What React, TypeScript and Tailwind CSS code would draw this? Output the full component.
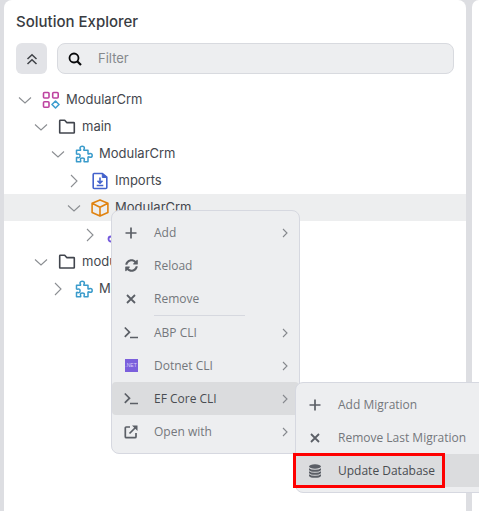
import type { ReactNode } from "react";
import { FaSyncAlt } from "react-icons/fa";

function Chevron({ open }: { open?: boolean }) {
  return (
    <svg viewBox="0 0 14 14" className="size-3.5 shrink-0" fill="none" stroke="#8b8e92" strokeWidth="1.1">
      <path d={open ? "M1 4.500 7 10l6-5.500" : "M4 1 10 7l-6 6"} />
    </svg>
  );
}

function CollapseIcon() {
  return (
    <svg viewBox="0 0 12 12" className="size-3" fill="none" stroke="#3f4247" strokeWidth="1.500">
      <path d="M1.500 6 6 1.700 10.500 6M1.500 11 6 6.700 10.500 11" />
    </svg>
  );
}

function SearchIcon() {
  return (
    <svg viewBox="0 0 14 14" className="size-3.5 shrink-0" fill="none" stroke="#08090b" strokeWidth="1.800">
      <circle cx="6" cy="6" r="4.500" />
      <path d="m9.200 9.200 3.800 3.800" strokeWidth="2.200" />
    </svg>
  );
}

function SolutionIcon() {
  return (
    <svg viewBox="0 0 18 18" className="size-[18px] shrink-0" fill="none" stroke="#bd43a0" strokeWidth="1.600">
      <rect x="1.500" y="1.500" width="5.500" height="5.500" rx="1" />
      <rect x="10.700" y="1.500" width="5.500" height="5.500" rx="1" />
      <rect x="1.500" y="10.700" width="5.500" height="5.500" rx="1" />
      <path d="m13.500 10 3.500 3.500-3.500 3.500-3.500-3.500z" stroke="#3f9fd0" strokeLinejoin="round" />
    </svg>
  );
}

function FolderIcon() {
  return (
    <svg viewBox="0 0 18 18" className="size-[18px] shrink-0" fill="none" stroke="#41454d" strokeWidth="1.600" strokeLinejoin="round">
      <path d="M2.300 2.300h4.400l2 2.300h7q.600 0 .600.600v9.200q0 .600-.600.600H2.300q-.600 0-.600-.600V2.900q0-.600.600-.600z" />
    </svg>
  );
}

function PuzzleIcon() {
  return (
    <svg viewBox="0 0 18 18" className="size-[18px] shrink-0" fill="none" stroke="#3a9bcb" strokeWidth="1.500" strokeLinejoin="round">
      <path d="M1.500 5.300h4C6 4.500 5 4.200 5 3.100 5 2 6 1.200 7.200 1.200s2.200.800 2.200 1.900c0 1.100-1 1.400-.5 2.200H13v3.500c.8.600 1.300-.3 2.300-.3 1.100 0 1.900.8 1.900 1.900s-.8 1.900-1.900 1.900c-1 0-1.500-.9-2.300-.3v4.700H9.200c-.6-.7.200-1.200.2-2.100 0-.9-.9-1.500-2-1.500s-2 .6-2 1.500c0 .9.800 1.400.2 2.100H1.500v-4.200c.7-.6 1.200.2 2 .2 1 0 1.600-.8 1.600-1.700S4.500 8.900 3.500 8.900c-.8 0-1.300.7-2 .1z" />
    </svg>
  );
}

function ImportsIcon() {
  return (
    <svg viewBox="0 0 18 18" className="size-[18px] shrink-0" fill="none" stroke="#4362cc" strokeWidth="1.600" strokeLinejoin="round">
      <path d="M3 1.500h8.500L15.800 5v10.500q0 1-1 1H3.200q-1 0-1-1v-13q0-1 1-1z" />
      <path d="M11.300 1.500V5.500h4.500z" fill="#4362cc" strokeWidth="1" />
      <path d="M9 5.500v5.500M6.500 8.700 9 11.200l2.500-2.500M5.700 13.500h6.600" />
    </svg>
  );
}

function PackageIcon() {
  return (
    <svg viewBox="0 0 18 18" className="size-[18px] shrink-0" fill="none" stroke="#e0820f" strokeWidth="1.600" strokeLinejoin="round">
      <path d="m9 .900 7.900 3.400v9.300L9 17.100l-7.900-3.500V4.300zM1.100 4.300 9 8.200l7.900-3.900M9 8.200v8.900" />
    </svg>
  );
}

function HostIcon() {
  return (
    <svg viewBox="0 0 18 18" className="size-[18px] shrink-0" fill="none" stroke="#7358dc" strokeWidth="1.800">
      <circle cx="4" cy="13" r="2.500" />
      <circle cx="13" cy="5" r="2.500" />
      <path d="m6 11 5-4" />
    </svg>
  );
}

function PlusIcon() {
  return (
    <svg viewBox="0 0 14 14" className="size-3.5" fill="none" stroke="#5b5f66" strokeWidth="1.700">
      <path d="M7 1.500v11M1.500 7h11" />
    </svg>
  );
}

function CrossIcon() {
  return (
    <svg viewBox="0 0 14 14" className="size-3.5" fill="none" stroke="#5b5f66" strokeWidth="1.800">
      <path d="m3 3 8 8M11 3l-8 8" />
    </svg>
  );
}

function TerminalIcon() {
  return (
    <svg viewBox="0 0 14 14" className="size-3.5" fill="none" stroke="#5b5f66" strokeWidth="1.700">
      <path d="M.8 1.500 5.500 6.200.8 10.900M6 11.500h8" />
    </svg>
  );
}

function DotnetIcon() {
  return (
    <span className="flex size-[13px] items-center justify-center bg-[#7b5fdc] font-['Liberation_Sans',sans-serif] text-[5px] leading-none text-[#d8cff8]">
      .NET
    </span>
  );
}

function OpenIcon() {
  return (
    <svg viewBox="0 0 14 14" className="size-3.5" fill="none" stroke="#5b5f66" strokeWidth="1.700">
      <path d="M6 2H2.300q-1 0-1 1v8.700q0 1 1 1h8.700q1 0 1-1V8M5.500 8.500l6-6" />
      <path d="M8 .500h5.500V6z" fill="#5b5f66" stroke="none" />
    </svg>
  );
}

function DatabaseIcon() {
  return (
    <svg viewBox="0 0 14 14" className="size-3.5" fill="#5b5f66">
      <ellipse cx="7" cy="2.500" rx="6" ry="2.200" />
      <path d="M1 4.300q2 1.500 6 1.500t6-1.500v1.600q-1 1.900-6 1.900T1 5.900z" />
      <path d="M1 7.300q2 1.500 6 1.500t6-1.500v1.600q-1 1.900-6 1.900T1 8.900z" />
      <path d="M1 10.300q2 1.500 6 1.500t6-1.500v1.600q-1 1.900-6 1.900t-6-1.900z" />
    </svg>
  );
}

type NodeProps = { indent: string; open?: boolean; icon: ReactNode; label?: string; selected?: boolean };

function TreeNode({ indent, open, icon, label, selected }: NodeProps) {
  return (
    <li
      role="treeitem"
      aria-expanded={!!open}
      aria-selected={!!selected}
      className={`flex h-[27px] items-center ${indent} ${selected ? "bg-[#edeeef]" : ""}`}
    >
      <Chevron open={open} />
      <span className="ml-2.5">{icon}</span>
      {label && <span className="ml-1.5 whitespace-nowrap">{label}</span>}
    </li>
  );
}

type ItemProps = { icon: ReactNode; label: string; more?: boolean; active?: boolean };

function MenuItem({ icon, label, more, active }: ItemProps) {
  return (
    <button
      type="button"
      role="menuitem"
      className={`flex h-[33px] w-full items-center pr-2 pl-3 text-left ${
        active ? "rounded bg-[#dbdcde] text-[#494c51]" : "text-[#74777c]"
      }`}
    >
      <span className="flex w-3.5 justify-center">{icon}</span>
      <span className="ml-4 flex-1 whitespace-nowrap">{label}</span>
      {more && (
        <svg viewBox="0 0 12 12" className="size-3" fill="none" stroke="#85888d" strokeWidth="1.100">
          <path d="m4 2 4 4-4 4" />
        </svg>
      )}
    </button>
  );
}

export default function App() {
  return (
    <div className="relative flex min-h-screen gap-1.5 overflow-hidden bg-[#dddee2] pl-1 font-['Inter','Open_Sans',sans-serif] text-[13px] text-[#45484e]">
      <main className="min-w-0 flex-1 rounded-t-lg bg-white">
        <h1 className="px-3 pt-3 text-[15px] leading-5 font-medium text-[#393c42]">Solution Explorer</h1>
        <div className="flex gap-2.5 px-3 pt-[11px]">
          <button
            type="button"
            aria-label="Collapse all"
            className="flex size-[31px] shrink-0 items-center justify-center rounded-md bg-[#e2e3e7]"
          >
            <CollapseIcon />
          </button>
          <label className="flex h-[31px] flex-1 items-center gap-4 rounded-lg border border-[#d8dadf] bg-[#edeef0] px-2.5">
            <SearchIcon />
            <input
              type="text"
              aria-label="Filter"
              placeholder="Filter"
              className="min-w-0 flex-1 bg-transparent outline-none placeholder:text-[#85888c]"
            />
          </label>
        </div>
        <ul role="tree" className="pt-3">
          <TreeNode indent="pl-3.5" open icon={<SolutionIcon />} label="ModularCrm" />
          <TreeNode indent="pl-[30px]" open icon={<FolderIcon />} label="main" />
          <TreeNode indent="pl-[47px]" open icon={<PuzzleIcon />} label="ModularCrm" />
          <TreeNode indent="pl-[63px]" icon={<ImportsIcon />} label="Imports" />
          <TreeNode indent="pl-[63px]" open selected icon={<PackageIcon />} label="ModularCrm" />
          <TreeNode indent="pl-[79px]" icon={<HostIcon />} />
          <TreeNode indent="pl-[30px]" open icon={<FolderIcon />} label="modules" />
          <TreeNode indent="pl-[47px]" icon={<PuzzleIcon />} label="ModularCrm" />
        </ul>
      </main>
      <aside className="w-[7px] shrink-0 rounded-tl-lg bg-white" />

      <div
        role="menu"
        className="absolute top-[210px] left-[111px] w-[189px] rounded-lg border border-[#d6d8e0] bg-[#edeef0] py-[5px] font-['Open_Sans','Noto_Sans',sans-serif] text-xs"
      >
        <MenuItem icon={<PlusIcon />} label="Add" more />
        <MenuItem icon={<FaSyncAlt size={13} color="#5b5f66" />} label="Reload" />
        <MenuItem icon={<CrossIcon />} label="Remove" />
        <hr className="mr-[54px] ml-[42px] border-[#d6d8df]" />
        <MenuItem icon={<TerminalIcon />} label="ABP CLI" more />
        <MenuItem icon={<DotnetIcon />} label="Dotnet CLI" more />
        <div className="relative">
          <MenuItem icon={<TerminalIcon />} label="EF Core CLI" more active />
          <div
            role="menu"
            className="absolute top-0 left-[183px] w-[200px] rounded-lg border border-[#d6d8e0] bg-[#edeef0] py-[5px]"
          >
            <MenuItem icon={<PlusIcon />} label="Add Migration" />
            <MenuItem icon={<CrossIcon />} label="Remove Last Migration" />
            <div className="relative">
              <MenuItem icon={<DatabaseIcon />} label="Update Database" active />
              <div className="pointer-events-none absolute -inset-y-px -left-[3px] w-[152px] border-3 border-[#fe0000]" />
            </div>
          </div>
        </div>
        <MenuItem icon={<OpenIcon />} label="Open with" more />
      </div>
    </div>
  );
}
